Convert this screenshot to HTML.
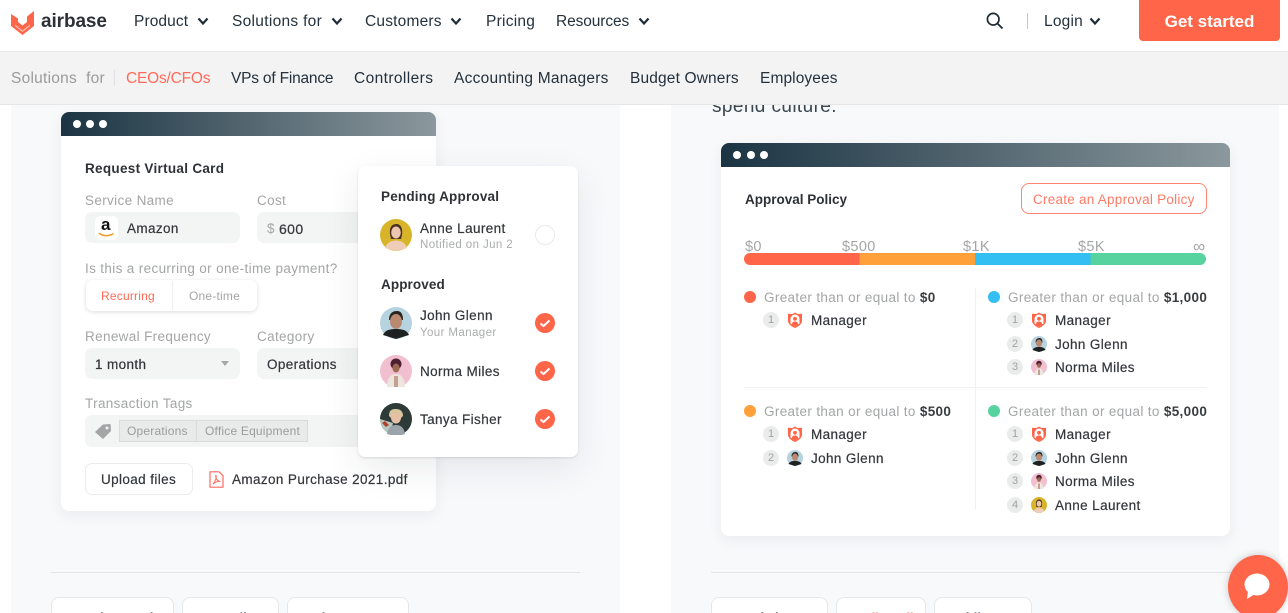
<!DOCTYPE html>
<html><head><meta charset="utf-8">
<style>
html,body{margin:0;padding:0;background:#fff;width:1288px;height:613px;overflow:hidden;font-family:"Liberation Sans",sans-serif}
#p{position:relative;width:1288px;height:613px;overflow:hidden;background:#fff}
.a{position:absolute}
.t{position:absolute;white-space:nowrap;line-height:20px;height:20px}
.n{font-size:15.5px;color:#24313c;top:12px}
.s{font-size:15.5px;color:#24313c;top:69px}
.b{filter:blur(.35px)}
.l{font-size:13.5px;color:#a3a5a6;letter-spacing:.35px;margin-top:2px}
.d{font-size:13.5px;color:#33363a;letter-spacing:.38px;margin-top:2px;-webkit-text-stroke:.2px #33363a}
.h{font-size:13.5px;color:#2e3135;font-weight:bold;letter-spacing:.1px;margin-top:2px}
.inp{position:absolute;background:#f3f4f4;border-radius:7px}
.num{position:absolute;width:16px;height:16px;border-radius:50%;background:#eaebeb;color:#a0a2a3;font-size:11px;line-height:16px;text-align:center}
.dot{position:absolute;width:12px;height:12px;border-radius:50%}
.ic{position:absolute}
.chip{position:absolute;top:597px;height:30px;background:#fff;border:1px solid #e6e7e9;border-radius:8px;box-sizing:border-box}
.ct{position:absolute;top:608px;font-size:13px;font-weight:bold;color:#1b2530;white-space:nowrap;line-height:20px}
.m{font-size:14.5px}
</style></head><body>
<div id="p">
<svg width="0" height="0" style="position:absolute">
<defs>
<symbol id="mgr" viewBox="0 0 16 16"><path d="M8 .5 10.500 2 15 1.800V8.500C15 12 11.500 14.500 8 16 4.500 14.500 1 12 1 8.500V1.800L5.500 2Z" fill="#ff6548"/><path d="M3.500 11.500V7A4.500 4.500 0 0 1 12.500 7V11.500L8 14.500Z" fill="#fff"/><circle cx="8" cy="6.800" r="1.900" fill="#ff6548"/><path d="M4.800 12.500C5 10.200 6.300 9.500 8 9.500s3 .7 3.200 3L8 14.500Z" fill="#ff6548"/></symbol>
<symbol id="anne" viewBox="0 0 32 32"><circle cx="16" cy="16" r="16" fill="#d8b42a"/><path d="M10 15C9 7 13 5 16.500 5S23 8 22 16l-1 4H11Z" fill="#4a3322"/><ellipse cx="16" cy="13.500" rx="4.800" ry="6" fill="#eec5ae"/><path d="M5 29C7 23 12 21.500 16 21.500S25 23 27 29L16 32Z" fill="#efcdb9"/></symbol>
<symbol id="john" viewBox="0 0 32 32"><circle cx="16" cy="16" r="16" fill="#b6d3df"/><path d="M9 13C9 6 13 4 17 4s6 3 6 9Z" fill="#2b2522"/><ellipse cx="16" cy="14.500" rx="6" ry="7.500" fill="#b98a70"/><path d="M3 28C5 23 10 22 16 22s11 1 13 6L16 32Z" fill="#1e2122"/></symbol>
<symbol id="norma" viewBox="0 0 32 32"><circle cx="16" cy="16" r="16" fill="#f2bfd0"/><circle cx="16" cy="9" r="5.500" fill="#4b2030"/><ellipse cx="16" cy="13" rx="3.600" ry="4.500" fill="#9c6a50"/><path d="M7 32C7 23 11 19 16 19s9 4 9 13Z" fill="#ece6de"/><rect x="14" y="21" width="4" height="11" fill="#c4a090"/></symbol>
<symbol id="tanya" viewBox="0 0 32 32"><circle cx="16" cy="16" r="16" fill="#2d3a38"/><path d="M0 16A16 16 0 0 0 10 31L13 20Z" fill="#b8c8c0"/><path d="M6 24 2 20l3-2 4 4Z" fill="#b0402a"/><path d="M9 13C9 7 12 6 16 6s7 2 7 7l-2 2H11Z" fill="#d6c6a0"/><ellipse cx="16" cy="15" rx="5" ry="5.500" fill="#e6c0a4"/><path d="M7 31C8 24 12 22 16 22s8 2 9 9Q16 34 7 31Z" fill="#9aa4aa"/></symbol>
</defs></svg>

<!-- panels -->
<div class="a" style="left:11px;top:105px;width:609px;height:508px;background:#f8f9fb"></div>
<div class="a" style="left:671px;top:105px;width:608px;height:508px;background:#f8f9fb"></div>
<div class="t" style="left:712px;top:97px;font-size:19px;letter-spacing:.4px;color:#3a4650">spend culture.</div>

<!-- left card -->
<div class="a" style="left:61px;top:112px;width:375px;height:399px;background:#fff;border-radius:8px;box-shadow:0 4px 14px rgba(30,40,60,.07);overflow:hidden">
<div style="height:24px;background:linear-gradient(90deg,#1b3443,#8b989d)"></div></div>
<div class="b">
<div class="a" style="left:73px;top:120px;width:8px;height:8px;border-radius:50%;background:#fff;box-shadow:13px 0 #fff,26px 0 #fff"></div>
<div class="t h" style="left:85px;top:157px;letter-spacing:.3px">Request Virtual Card</div>
<div class="t l" style="left:85px;top:189px">Service Name</div>
<div class="t l" style="left:257px;top:189px">Cost</div>
<div class="inp" style="left:85px;top:212px;width:155px;height:31px"></div>
<div class="inp" style="left:257px;top:212px;width:110px;height:31px"></div>
<div class="a" style="left:95px;top:216px;width:23px;height:24px;background:#fff;border-radius:6px"></div>
<div class="t" style="left:101px;top:215px;font-size:17px;font-weight:bold;color:#111">a</div>
<svg class="a" style="left:98px;top:232px" width="17" height="6" viewBox="0 0 17 6"><path d="M1 1C5 4.500 11 4.500 15.500 1.500" fill="none" stroke="#f59a23" stroke-width="1.500"/></svg>
<div class="t d" style="left:127px;top:217px">Amazon</div>
<div class="t l" style="left:267px;top:217px">$</div>
<div class="t d" style="left:279px;top:217px;font-size:14px">600</div>
<div class="t l" style="left:85px;top:257px">Is this a recurring or one-time payment?</div>
<div class="a" style="left:86px;top:280px;width:171px;height:31px;background:#fff;border-radius:7px;box-shadow:0 1px 5px rgba(0,0,0,.14)"></div>
<div class="a" style="left:172px;top:281px;width:1px;height:29px;background:#eee"></div>
<div class="t" style="left:101px;top:286px;font-size:12px;letter-spacing:.2px;color:#ff6b55">Recurring</div>
<div class="t" style="left:189px;top:286px;font-size:12px;letter-spacing:.2px;color:#a3a5a6">One-time</div>
<div class="t l" style="left:85px;top:325px">Renewal Frequency</div>
<div class="t l" style="left:257px;top:325px">Category</div>
<div class="inp" style="left:85px;top:348px;width:155px;height:31px"></div>
<div class="inp" style="left:257px;top:348px;width:110px;height:31px"></div>
<div class="t d" style="left:95px;top:353px">1 month</div>
<div class="a" style="left:221px;top:361px;width:0;height:0;border:4.500px solid transparent;border-top:5px solid #a5a7a8;border-bottom:0"></div>
<div class="t d" style="left:267px;top:353px">Operations</div>
<div class="t l" style="left:85px;top:392px">Transaction Tags</div>
<div class="inp" style="left:85px;top:415px;width:280px;height:32px"></div>
<svg class="a" style="left:94px;top:423px" width="18" height="17" viewBox="0 0 18 17"><path d="M1 9 9 1.500 16.500 1 17 8 9 16Z" fill="#a3a5a6"/><circle cx="13" cy="5" r="1.500" fill="#f3f4f4"/></svg>
<div class="a" style="left:119px;top:420px;width:189px;height:22px;background:#e9eaea;border:1px solid #d9dada;box-sizing:border-box"></div>
<div class="a" style="left:196px;top:420px;width:1px;height:22px;background:#d9dada"></div>
<div class="t" style="left:127px;top:421px;font-size:12px;letter-spacing:.2px;color:#9a9c9d">Operations</div>
<div class="t" style="left:205px;top:421px;font-size:12px;letter-spacing:.2px;color:#9a9c9d">Office Equipment</div>
<div class="a" style="left:85px;top:463px;width:108px;height:32px;border:1px solid #ececec;border-radius:7px;box-sizing:border-box;background:#fff"></div>
<div class="t d" style="left:101px;top:468px">Upload files</div>
<svg class="a" style="left:209px;top:471px" width="15" height="17" viewBox="0 0 15 17"><path d="M1 .8H10L14 4.500V16.200H1Z" fill="#fff" stroke="#ff6b62" stroke-width="1.200"/><path d="M4 13C6 11 8 6 7 4.500 6 4 7 10 11 10.500 12 10 7 10 4 13Z" fill="none" stroke="#ff6b62"/></svg>
<div class="t d" style="left:232px;top:468px">Amazon Purchase 2021.pdf</div>
</div>

<!-- popup -->
<div class="a" style="left:358px;top:166px;width:220px;height:291px;background:#fff;border-radius:7px;box-shadow:0 1px 2px rgba(0,0,0,.12),0 12px 36px rgba(30,40,60,.09)"></div>
<div class="b">
<div class="t h" style="left:381px;top:185px;letter-spacing:.2px">Pending Approval</div>
<svg class="ic" style="left:380px;top:219px" width="32" height="32"><use href="#anne"/></svg>
<div class="t d" style="left:420px;top:217px">Anne Laurent</div>
<div class="t" style="left:420px;top:235px;font-size:11.500px;letter-spacing:.4px;color:#aaacad">Notified on Jun 2</div>
<div class="a" style="left:535px;top:225px;width:20px;height:20px;border:1px solid #e9e9e9;border-radius:50%;box-sizing:border-box"></div>
<div class="t h" style="left:381px;top:273px">Approved</div>
<svg class="ic" style="left:380px;top:307px" width="32" height="32"><use href="#john"/></svg>
<div class="t d" style="left:420px;top:304px">John Glenn</div>
<div class="t" style="left:420px;top:323px;font-size:11.500px;letter-spacing:.4px;color:#aaacad">Your Manager</div>
<svg class="ic" style="left:380px;top:355px" width="32" height="32"><use href="#norma"/></svg>
<div class="t d" style="left:420px;top:360px">Norma Miles</div>
<svg class="ic" style="left:380px;top:403px" width="32" height="32"><use href="#tanya"/></svg>
<div class="t d" style="left:420px;top:408px">Tanya Fisher</div>
<svg class="ic" style="left:535px;top:313px" width="20" height="20"><circle cx="10" cy="10" r="10" fill="#ff6548"/><path d="M5.500 10.500 8.500 13 14.500 7.500" fill="none" stroke="#fff" stroke-width="2"/></svg>
<svg class="ic" style="left:535px;top:361px" width="20" height="20"><circle cx="10" cy="10" r="10" fill="#ff6548"/><path d="M5.500 10.500 8.500 13 14.500 7.500" fill="none" stroke="#fff" stroke-width="2"/></svg>
<svg class="ic" style="left:535px;top:409px" width="20" height="20"><circle cx="10" cy="10" r="10" fill="#ff6548"/><path d="M5.500 10.500 8.500 13 14.500 7.500" fill="none" stroke="#fff" stroke-width="2"/></svg>
</div>

<!-- right card -->
<div class="a" style="left:721px;top:143px;width:509px;height:393px;background:#fff;border-radius:8px;box-shadow:0 4px 14px rgba(30,40,60,.07);overflow:hidden">
<div style="height:24px;background:linear-gradient(90deg,#1b3443,#8b989d)"></div></div>
<div class="b">
<div class="a" style="left:733px;top:151px;width:8px;height:8px;border-radius:50%;background:#fff;box-shadow:14px 0 #fff,27px 0 #fff"></div>
<div class="t h" style="left:745px;top:188px;letter-spacing:0">Approval Policy</div>
<div class="a" style="left:1021px;top:183px;width:186px;height:31px;border:1.500px solid #ff8473;border-radius:8px;box-sizing:border-box"></div>
<div class="t" style="left:1033px;top:190px;font-size:13.500px;letter-spacing:.25px;color:#ff7a66">Create an Approval Policy</div>
<div class="t l m" style="left:745px;top:235px">$0</div>
<div class="t l m" style="left:842px;top:235px">$500</div>
<div class="t l m" style="left:963px;top:235px">$1K</div>
<div class="t l m" style="left:1078px;top:235px">$5K</div>
<div class="t l" style="left:1193px;top:235px;font-size:17px">∞</div>
<div class="a" style="left:744px;top:253px;width:462px;height:12px;border-radius:6px;background:linear-gradient(90deg,#ff6548 0 25%,#ffa03a 25% 50%,#33bff2 50% 75%,#57d39f 75% 100%)"></div>
<div class="a" style="left:975px;top:288px;width:1px;height:222px;background:#f0f1f1"></div>
<div class="a" style="left:744px;top:387px;width:462px;height:1px;background:#f0f1f1"></div>

<div class="dot" style="left:744px;top:291px;background:#ff6548"></div>
<div class="t l" style="left:764px;top:286px">Greater than or equal to <b style="color:#3a3d40">$0</b></div>
<div class="num" style="left:763px;top:312px">1</div>
<svg class="ic" style="left:787px;top:312px" width="16" height="16"><use href="#mgr"/></svg>
<div class="t d" style="left:811px;top:309px">Manager</div>

<div class="dot" style="left:988px;top:291px;background:#33bff2"></div>
<div class="t l" style="left:1008px;top:286px">Greater than or equal to <b style="color:#3a3d40">$1,000</b></div>
<div class="num" style="left:1007px;top:312px">1</div>
<svg class="ic" style="left:1031px;top:312px" width="16" height="16"><use href="#mgr"/></svg>
<div class="t d" style="left:1055px;top:309px">Manager</div>
<div class="num" style="left:1007px;top:336px">2</div>
<svg class="ic" style="left:1031px;top:336px" width="16" height="16"><use href="#john"/></svg>
<div class="t d" style="left:1055px;top:333px">John Glenn</div>
<div class="num" style="left:1007px;top:359px">3</div>
<svg class="ic" style="left:1031px;top:359px" width="16" height="16"><use href="#norma"/></svg>
<div class="t d" style="left:1055px;top:356px">Norma Miles</div>

<div class="dot" style="left:744px;top:405px;background:#ffa03a"></div>
<div class="t l" style="left:764px;top:400px">Greater than or equal to <b style="color:#3a3d40">$500</b></div>
<div class="num" style="left:763px;top:426px">1</div>
<svg class="ic" style="left:787px;top:426px" width="16" height="16"><use href="#mgr"/></svg>
<div class="t d" style="left:811px;top:423px">Manager</div>
<div class="num" style="left:763px;top:450px">2</div>
<svg class="ic" style="left:787px;top:450px" width="16" height="16"><use href="#john"/></svg>
<div class="t d" style="left:811px;top:447px">John Glenn</div>

<div class="dot" style="left:988px;top:405px;background:#57d39f"></div>
<div class="t l" style="left:1008px;top:400px">Greater than or equal to <b style="color:#3a3d40">$5,000</b></div>
<div class="num" style="left:1007px;top:426px">1</div>
<svg class="ic" style="left:1031px;top:426px" width="16" height="16"><use href="#mgr"/></svg>
<div class="t d" style="left:1055px;top:423px">Manager</div>
<div class="num" style="left:1007px;top:450px">2</div>
<svg class="ic" style="left:1031px;top:450px" width="16" height="16"><use href="#john"/></svg>
<div class="t d" style="left:1055px;top:447px">John Glenn</div>
<div class="num" style="left:1007px;top:473px">3</div>
<svg class="ic" style="left:1031px;top:473px" width="16" height="16"><use href="#norma"/></svg>
<div class="t d" style="left:1055px;top:470px">Norma Miles</div>
<div class="num" style="left:1007px;top:497px">4</div>
<svg class="ic" style="left:1031px;top:497px" width="16" height="16"><use href="#anne"/></svg>
<div class="t d" style="left:1055px;top:494px">Anne Laurent</div>
</div>

<!-- bottom rules + chips -->
<div class="a" style="left:51px;top:572px;width:529px;height:1px;background:#e3e4e6"></div>
<div class="a" style="left:711px;top:572px;width:529px;height:1px;background:#e3e4e6"></div>
<div class="chip" style="left:51px;width:123px"></div>
<div class="chip" style="left:182px;width:97px"></div>
<div class="chip" style="left:287px;width:122px"></div>
<div class="chip" style="left:711px;width:117px"></div>
<div class="chip" style="left:836px;width:90px"></div>
<div class="chip" style="left:934px;width:98px"></div>
<div class="ct" style="left:64px">Spend Controls</div>
<div class="ct" style="left:197px">Controllers</div>
<div class="ct" style="left:300px">Budget Owners</div>
<div class="ct" style="left:723px">VPs of Finance</div>
<div class="ct" style="left:850px;color:#ff6548">Audit Trail</div>
<div class="ct" style="left:947px">Mobile App</div>

<!-- top nav -->
<div class="a" style="left:0;top:0;width:1288px;height:51px;background:#fff;border-bottom:1px solid #e6e6e6"></div>
<div class="a" style="left:0;top:52px;width:1288px;height:52px;background:#f3f3f3;border-bottom:1px solid #e6e6e6"></div>
<svg class="a" style="left:11px;top:11px" width="23" height="24" viewBox="0 0 23 24"><path d="M0 3 7 7.500V11L11.500 14.500 16 11V5.500L23 0V15L11.500 24 0 15Z" fill="#ff6548"/><path d="M4 13.500 11.500 19.500 19 13.500V15L11.500 21 4 15Z" fill="#fff" opacity=".6"/></svg>
<div class="t" style="left:41px;top:12px;font-size:19px;font-weight:bold;color:#2c3136;letter-spacing:-.1px">airbase</div>

<div class="t n" style="left:134px;letter-spacing:.1px">Product</div>
<div class="t n" style="left:232px;letter-spacing:.3px">Solutions for</div>
<div class="t n" style="left:365px;letter-spacing:.2px">Customers</div>
<div class="t n" style="left:486px;letter-spacing:.25px">Pricing</div>
<div class="t n" style="left:556px;letter-spacing:-.1px">Resources</div>
<div class="t n" style="left:1044px;letter-spacing:.2px">Login</div>
<svg class="a" style="left:197px;top:17px" width="12" height="9"><path d="M1.500 1.500 6 6.500 10.500 1.500" fill="none" stroke="#1f2c38" stroke-width="2.200"/></svg>
<svg class="a" style="left:331px;top:17px" width="12" height="9"><path d="M1.500 1.500 6 6.500 10.500 1.500" fill="none" stroke="#1f2c38" stroke-width="2.200"/></svg>
<svg class="a" style="left:450px;top:17px" width="12" height="9"><path d="M1.500 1.500 6 6.500 10.500 1.500" fill="none" stroke="#1f2c38" stroke-width="2.200"/></svg>
<svg class="a" style="left:638px;top:17px" width="12" height="9"><path d="M1.500 1.500 6 6.500 10.500 1.500" fill="none" stroke="#1f2c38" stroke-width="2.200"/></svg>
<svg class="a" style="left:1089px;top:17px" width="12" height="9"><path d="M1.500 1.500 6 6.500 10.500 1.500" fill="none" stroke="#1f2c38" stroke-width="2.200"/></svg>
<svg class="a" style="left:986px;top:12px" width="18" height="18"><circle cx="7.200" cy="7.200" r="5.800" fill="none" stroke="#1f2c38" stroke-width="1.700"/><path d="M11.500 11.500 16.500 16.500" stroke="#1f2c38" stroke-width="1.900"/></svg>
<div class="a" style="left:1027px;top:13px;width:1px;height:16px;background:#c9c9c9"></div>
<div class="a" style="left:1139px;top:0;width:141px;height:41px;background:#ff6548;border-radius:0 0 4px 4px;color:#fff;font-size:17px;font-weight:bold;text-align:center;line-height:43px">Get started</div>

<div class="t s" style="left:11px;color:#9a9a9a;letter-spacing:.25px">Solutions&nbsp; for</div>
<div class="a" style="left:114px;top:70px;width:1px;height:16px;background:#e0e0e0"></div>
<div class="t s" style="left:126px;color:#ff6b5a;letter-spacing:-.2px">CEOs/CFOs</div>
<div class="t s" style="left:231px;letter-spacing:-.2px">VPs of Finance</div>
<div class="t s" style="left:354px;letter-spacing:.4px">Controllers</div>
<div class="t s" style="left:454px;letter-spacing:.25px">Accounting Managers</div>
<div class="t s" style="left:630px;letter-spacing:.15px">Budget Owners</div>
<div class="t s" style="left:760px;letter-spacing:.1px">Employees</div>

<!-- chat -->
<div class="a" style="left:1228px;top:555px;width:60px;height:64px;border-radius:50%;background:#ff6548;box-shadow:0 0 8px rgba(0,0,0,.2)"></div>
<svg class="a" style="left:1242px;top:571px" width="30" height="30" viewBox="0 0 30 30"><ellipse cx="15" cy="13.500" rx="12.500" ry="11" fill="#fff"/><path d="M6 20 5 28 13 23Z" fill="#fff"/></svg>
</div>
</body></html>
